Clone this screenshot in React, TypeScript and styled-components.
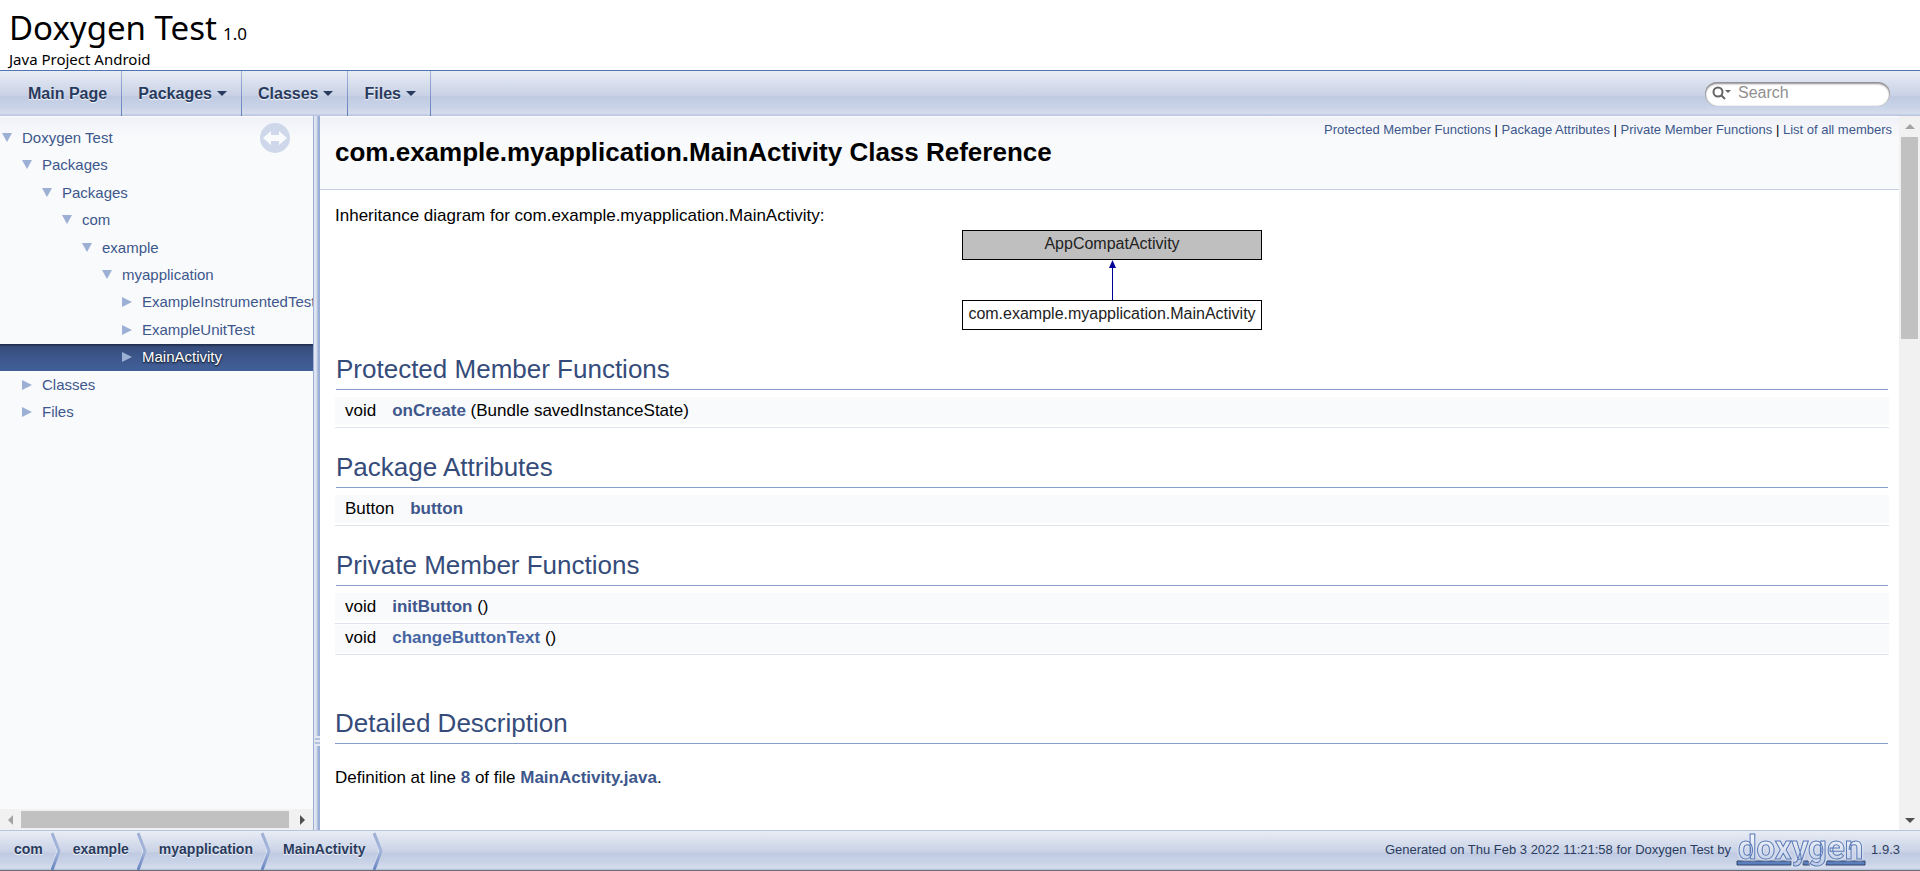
import React from 'react';
import styled, { createGlobalStyle, css } from 'styled-components';

const Global = createGlobalStyle`
  * { box-sizing: border-box; }
  html, body, #root { height: 100%; }
  body {
    margin: 0;
    background: #fff;
    color: #000;
    font: 400 17px/28px "Liberation Sans", Arial, sans-serif;
  }
`;

const Page = styled.div`
  display: flex;
  flex-direction: column;
  height: 100%;
  border-bottom: 1px solid #6b6b70;
  overflow: hidden;
`;

const Masthead = styled.header`
  flex: none;
  padding: 8px 9px 0;
  border-bottom: 1px solid #5373b4;
  font-family: "Noto Sans", Tahoma, sans-serif;
`;

const ProjectName = styled.h1`
  display: flex;
  align-items: baseline;
  gap: 6px;
  margin: 0;
  height: 40px;
  font-size: 33px;
  line-height: 40px;
  font-weight: 400;
`;

const ProjectNumber = styled.span`
  font-size: 17px;
`;

const ProjectBrief = styled.div`
  font-size: 15px;
  line-height: 22px;
`;

const barGradient = css`
  background: linear-gradient(#e9edf5 0%, #d6ddec 30%, #c9d2e6 54%, #bfcae2 56%, #c9d3e7 80%, #d5dcec 94%, #b4c1de 100%);
`;

const NavBar = styled.nav`
  display: flex;
  align-items: center;
  justify-content: space-between;
  height: 45px;
  flex: none;
  padding: 0 30px 0 12px;
  ${barGradient}
`;

const TabList = styled.ul`
  display: flex;
  align-self: stretch;
  margin: 0;
  padding: 0;
  list-style: none;
`;

const TabItem = styled.li`
  display: flex;
  border-right: 1px solid;
  border-image: linear-gradient(#a5b5da, #5f7dbb) 1;
`;

const Tab = styled.a`
  display: flex;
  align-items: center;
  gap: 5px;
  padding: 0 14px 0 16px;
  font-size: 16px;
  font-weight: 700;
  color: #283a5d;
  text-decoration: none;
  text-shadow: 0 1px 1px rgba(255, 255, 255, 0.9);
`;

const SearchBox = styled.label`
  display: flex;
  align-items: center;
  gap: 7px;
  width: 185px;
  height: 24px;
  padding: 0 8px 2px 7px;
  border-radius: 12px;
  background: #fff;
  box-shadow: inset 0 2px 2px #8e8e92, inset 1px 0 1px #a5a5aa, inset -1px 0 1px #b8b8bc;
`;

const SearchInput = styled.input`
  flex: 1;
  min-width: 0;
  height: 20px;
  padding: 0;
  border: 0;
  outline: 0;
  background: transparent;
  font: 16px/20px "Liberation Sans", Arial, sans-serif;
  &::placeholder { color: #909090; opacity: 1; }
`;

const Middle = styled.div`
  display: flex;
  flex: 1;
  min-height: 0;
`;

const Side = styled.aside`
  position: relative;
  display: flex;
  flex-direction: column;
  flex: none;
  width: 313px;
  background: linear-gradient(#fff 0, #eff2f8 2px, #f9fafc 22px);
`;

const SyncButton = styled.button`
  position: absolute;
  top: 7px;
  right: 23px;
  width: 30px;
  height: 30px;
  padding: 0;
  border: 0;
  background: none;
`;

const Tree = styled.ul`
  display: grid;
  grid-auto-rows: 1fr;
  min-height: 302px;
  margin: 8px 0 auto;
  padding: 0;
  list-style: none;
  overflow: hidden;
`;

const TreeRow = styled.li<{ $depth: number; $selected?: boolean }>`
  display: flex;
  align-items: center;
  gap: 10px;
  padding-left: ${(p) => 2 + p.$depth * 20}px;
  white-space: nowrap;
  font-size: 15px;
  line-height: 26px;
  ${(p) =>
    p.$selected &&
    css`
      background: linear-gradient(#1d2a45 0, #364d7c 3px, #3d578c 50%, #415f99 100%);
    `}
`;

const TreeLink = styled.a<{ $selected?: boolean }>`
  color: ${(p) => (p.$selected ? '#fff' : '#3d578c')};
  text-decoration: none;
  text-shadow: ${(p) => (p.$selected ? '0 1px 2px #000' : 'none')};
`;

const Splitter = styled.div`
  display: flex;
  flex-direction: column;
  align-items: flex-end;
  justify-content: flex-end;
  flex: none;
  width: 7px;
  padding-bottom: 84px;
  background: linear-gradient(90deg, #9cafd4 0 1px, #dfe5f1 1px 3px, #d3dbeb 3px 4px, #b7c4df 4px 5px, #9cafd4 5px 7px);
`;

const Grip = styled.span`
  width: 5px;
  height: 10px;
  background: repeating-linear-gradient(#e3e8f2 0 2px, #b3c1dd 2px 4px);
`;

const ScrollTrack = styled.div<{ $vertical?: boolean }>`
  display: flex;
  flex-direction: ${(p) => (p.$vertical ? 'column' : 'row')};
  flex: none;
  align-items: center;
  background: #f1f1f1;
  ${(p) => (p.$vertical ? 'width: 21px;' : 'height: 21px;')}
`;

const ScrollArrow = styled.button`
  display: flex;
  align-items: center;
  justify-content: center;
  flex: none;
  width: 21px;
  height: 21px;
  padding: 0;
  border: 0;
  background: none;
`;

const ScrollRun = styled.div`
  flex: 1;
`;

const ScrollThumb = styled.div<{ $vertical?: boolean }>`
  background: #c1c1c1;
  ${(p) => (p.$vertical ? 'width: 17px; height: 30%;' : 'height: 17px; width: 99%;')}
`;

const Main = styled.main`
  flex: 1;
  min-width: 0;
  overflow: hidden;
`;

const DocHeader = styled.div`
  height: 74px;
  padding: 0 7px 0 15px;
  border-bottom: 1px solid #c4cfe5;
  background: linear-gradient(#fff 0, #eff2f8 2px, #f9fafc 22px);
`;

const Summary = styled.div`
  height: 21px;
  padding-top: 4px;
  text-align: right;
  font-size: 13px;
  line-height: 19px;
  a { color: #3d578c; text-decoration: none; }
`;

const DocTitle = styled.h2`
  margin: 0;
  font-size: 26px;
  line-height: 30px;
  font-weight: 700;
`;

const Contents = styled.div`
  padding: 12px 10px 0 15px;
`;

const Para = styled.p`
  margin: 0;
`;

const Diagram = styled.figure`
  display: flex;
  flex-direction: column;
  align-items: center;
  margin: 0;
`;

const ClassBox = styled.div<{ $grey?: boolean }>`
  width: 300px;
  height: 30px;
  border: 1px solid #000;
  background: ${(p) => (p.$grey ? '#bfbfbf' : '#fff')};
  color: #222;
  text-align: center;
  font-size: 16px;
  line-height: 26px;
`;

const MemberTable = styled.table`
  width: 100%;
  border-collapse: collapse;
  margin-top: 24px;
`;

const GroupHeading = styled.caption`
  height: 36px;
  margin: 0 1px 7px;
  border-bottom: 1px solid #879ecb;
  text-align: left;
  font-size: 26px;
  line-height: 30px;
  color: #354c7b;
`;

const MemberRow = styled.tr`
  border-bottom: 1px solid #dee4f0;
`;

const TypeCell = styled.td`
  width: 1px;
  height: 30px;
  padding: 0 16px 2px 10px;
  background: linear-gradient(#f9fafc 28px, #fff 28px);
  white-space: nowrap;
`;

const NameCell = styled.td`
  padding: 0 0 2px;
  background: linear-gradient(#f9fafc 28px, #fff 28px);
`;

const CodeLink = styled.a<{ $hot?: boolean }>`
  color: ${(p) => (p.$hot ? '#4665a2' : '#3d578c')};
  font-weight: 700;
  text-decoration: none;
`;

const SectionHeading = styled.h2`
  height: 36px;
  margin: 53px 1px 20px 0;
  border-bottom: 1px solid #879ecb;
  font-size: 26px;
  line-height: 30px;
  font-weight: 400;
  color: #354c7b;
`;

const Footer = styled.footer`
  display: flex;
  align-items: stretch;
  justify-content: space-between;
  flex: none;
  height: 40px;
  padding: 0 20px 0 2px;
  border-top: 1px solid #b7c4df;
  ${barGradient}
`;

const Crumbs = styled.ol`
  display: flex;
  margin: 0;
  padding: 0;
  list-style: none;
`;

const Crumb = styled.li`
  display: flex;
  align-items: center;
  gap: 8px;
  padding-left: 12px;
`;

const CrumbLink = styled.a`
  padding-bottom: 3px;
  font-size: 14px;
  font-weight: 700;
  color: #283a5d;
  text-decoration: none;
  text-shadow: 0 1px 1px rgba(255, 255, 255, 0.9);
`;

const Credit = styled.div`
  display: flex;
  align-items: center;
  gap: 5px;
  padding-bottom: 2px;
  font-size: 13px;
  color: #2a3d61;
`;

const Logo = styled.svg`
  overflow: visible;
  text {
    font: 700 33px Roboto, sans-serif;
    filter: drop-shadow(0 0 1px #dfe5f1) drop-shadow(0 0 1px #dfe5f1);
  }
`;

const Triangle = ({ dir, fill }: { dir: 'up' | 'down' | 'left' | 'right'; fill: string }) => {
  const points = {
    up: '0,7 5,2 10,7',
    down: '0,0 10,0 5,9',
    left: '7,0 2,5 7,10',
    right: '0,0 10,5 0,10',
  }[dir];
  return (
    <svg width="10" height="10" viewBox="0 0 10 10" aria-hidden="true">
      <polygon points={points} fill={fill} />
    </svg>
  );
};

const Chevron = ({ dir }: { dir: 'down' | 'right' }) => (
  <svg width="10" height="10" viewBox="0 0 10 10" aria-hidden="true">
    <polygon points={dir === 'down' ? '0,3 10,3 5,8' : '2,0 7,5 2,10'} fill="#505050" />
  </svg>
);

const tabs = [
  { label: 'Main Page', menu: false },
  { label: 'Packages', menu: true },
  { label: 'Classes', menu: true },
  { label: 'Files', menu: true },
];

const tree = [
  { label: 'Doxygen Test', depth: 0, open: true },
  { label: 'Packages', depth: 1, open: true },
  { label: 'Packages', depth: 2, open: true },
  { label: 'com', depth: 3, open: true },
  { label: 'example', depth: 4, open: true },
  { label: 'myapplication', depth: 5, open: true },
  { label: 'ExampleInstrumentedTest', depth: 6 },
  { label: 'ExampleUnitTest', depth: 6 },
  { label: 'MainActivity', depth: 6, selected: true },
  { label: 'Classes', depth: 1 },
  { label: 'Files', depth: 1 },
];

const groups = [
  { title: 'Protected Member Functions', rows: [{ type: 'void', name: 'onCreate', args: ' (Bundle savedInstanceState)' }] },
  { title: 'Package Attributes', rows: [{ type: 'Button', name: 'button', args: '' }] },
  {
    title: 'Private Member Functions',
    rows: [
      { type: 'void', name: 'initButton', args: ' ()' },
      { type: 'void', name: 'changeButtonText', args: ' ()', hot: true },
    ],
  },
];

const sections = ['Protected Member Functions', 'Package Attributes', 'Private Member Functions', 'List of all members'];
const crumbs = ['com', 'example', 'myapplication', 'MainActivity'];

export default function App() {
  return (
    <>
      <Global />
      <Page>
        <Masthead>
          <ProjectName>
            Doxygen Test <ProjectNumber>1.0</ProjectNumber>
          </ProjectName>
          <ProjectBrief>Java Project Android</ProjectBrief>
        </Masthead>

        <NavBar>
          <TabList>
            {tabs.map((t) => (
              <TabItem key={t.label}>
                <Tab href="#">
                  {t.label}
                  {t.menu && (
                    <svg width="10" height="5" viewBox="0 0 10 5" aria-hidden="true">
                      <polygon points="0,0 10,0 5,5" fill="#283a5d" />
                    </svg>
                  )}
                </Tab>
              </TabItem>
            ))}
          </TabList>
          <SearchBox>
            <svg width="19" height="14" viewBox="0 0 19 14" aria-hidden="true">
              <circle cx="6" cy="6" r="4.5" fill="none" stroke="#656565" strokeWidth="2" />
              <path d="M9 9l4 4" stroke="#656565" strokeWidth="2" />
              <polygon points="13,4 19,4 16,7" fill="#656565" />
            </svg>
            <SearchInput type="text" placeholder="Search" aria-label="Search" />
          </SearchBox>
        </NavBar>

        <Middle>
          <Side>
            <Tree>
              {tree.map((n, i) => (
                <TreeRow key={i} $depth={n.depth} $selected={n.selected}>
                  <Triangle dir={n.open ? 'down' : 'right'} fill="#9cafd4" />
                  <TreeLink href="#" $selected={n.selected}>
                    {n.label}
                  </TreeLink>
                </TreeRow>
              ))}
            </Tree>
            <SyncButton aria-label="Toggle link with main page">
              <svg width="30" height="30" viewBox="0 0 30 30" aria-hidden="true">
                <circle cx="15" cy="15" r="15" fill="#ced8ea" />
                <path d="M3 15l8-7v4h8V8l8 7-8 7v-4h-8v4z" fill="#f9fafc" />
              </svg>
            </SyncButton>
            <ScrollTrack>
              <ScrollArrow aria-label="Scroll left">
                <Triangle dir="left" fill="#a3a3a3" />
              </ScrollArrow>
              <ScrollRun>
                <ScrollThumb />
              </ScrollRun>
              <ScrollArrow aria-label="Scroll right">
                <Chevron dir="right" />
              </ScrollArrow>
            </ScrollTrack>
          </Side>

          <Splitter>
            <Grip />
          </Splitter>

          <Main>
            <DocHeader>
              <Summary>
                {sections.map((s, i) => (
                  <React.Fragment key={s}>
                    {i > 0 && ' | '}
                    <a href="#">{s}</a>
                  </React.Fragment>
                ))}
              </Summary>
              <DocTitle>com.example.myapplication.MainActivity Class Reference</DocTitle>
            </DocHeader>
            <Contents>
              <Para>Inheritance diagram for com.example.myapplication.MainActivity:</Para>
              <Diagram>
                <ClassBox $grey>AppCompatActivity</ClassBox>
                <svg width="10" height="40" viewBox="0 0 10 40" aria-hidden="true">
                  <path d="M5.500 6V40" stroke="#000099" />
                  <polygon points="5.500,0 9,8 2,8" fill="#000099" />
                </svg>
                <ClassBox>com.example.myapplication.MainActivity</ClassBox>
              </Diagram>
              {groups.map((g) => (
                <MemberTable key={g.title}>
                  <GroupHeading>{g.title}</GroupHeading>
                  <tbody>
                    {g.rows.map((r) => (
                      <MemberRow key={r.name}>
                        <TypeCell>{r.type}</TypeCell>
                        <NameCell>
                          <CodeLink href="#" $hot={r.hot}>
                            {r.name}
                          </CodeLink>
                          {r.args}
                        </NameCell>
                      </MemberRow>
                    ))}
                  </tbody>
                </MemberTable>
              ))}
              <SectionHeading>Detailed Description</SectionHeading>
              <Para>
                Definition at line <CodeLink href="#">8</CodeLink> of file <CodeLink href="#">MainActivity.java</CodeLink>.
              </Para>
            </Contents>
          </Main>

          <ScrollTrack $vertical>
            <ScrollArrow aria-label="Scroll up">
              <Triangle dir="up" fill="#a3a3a3" />
            </ScrollArrow>
            <ScrollRun>
              <ScrollThumb $vertical />
            </ScrollRun>
            <ScrollArrow aria-label="Scroll down">
              <Chevron dir="down" />
            </ScrollArrow>
          </ScrollTrack>
        </Middle>

        <Footer>
          <Crumbs>
            {crumbs.map((c) => (
              <Crumb key={c}>
                <CrumbLink href="#">{c}</CrumbLink>
                <svg width="10" height="38" viewBox="0 0 10 38" aria-hidden="true">
                  <defs>
                    <linearGradient id="crumbEdge" x1="0" y1="0" x2="0" y2="1">
                      <stop offset="0" stopColor="#9fb0d6" />
                      <stop offset="0.5" stopColor="#a3b4d9" />
                      <stop offset="1" stopColor="#6684c1" />
                    </linearGradient>
                  </defs>
                  <path d="M0 1L6 19L0 38" fill="none" stroke="#e3e8f3" strokeWidth="1" />
                  <path d="M1 1L8 19L1 38" fill="none" stroke="url(#crumbEdge)" strokeWidth="3" />
                </svg>
              </Crumb>
            ))}
          </Crumbs>
          <Credit>
            Generated on Thu Feb 3 2022 11:21:58 for Doxygen Test by
            <Logo width="130" height="34" viewBox="0 0 130 34" role="img" aria-label="doxygen">
              <defs>
                <linearGradient id="logoFill" x1="0" y1="0" x2="0" y2="1">
                  <stop offset="0.2" stopColor="#f3f6fa" />
                  <stop offset="1" stopColor="#bac8e3" />
                </linearGradient>
              </defs>
              <path d="M1 28H55V32H1zM67 28H72L74 32H67zM91 28H129V32H90z" fill="#5b7ebd" stroke="#34466e" />
              <text x="2" y="26" fill="url(#logoFill)" stroke="#5b7ab8" strokeWidth="1">
                doxygen
              </text>
            </Logo>
            1.9.3
          </Credit>
        </Footer>
      </Page>
    </>
  );
}
